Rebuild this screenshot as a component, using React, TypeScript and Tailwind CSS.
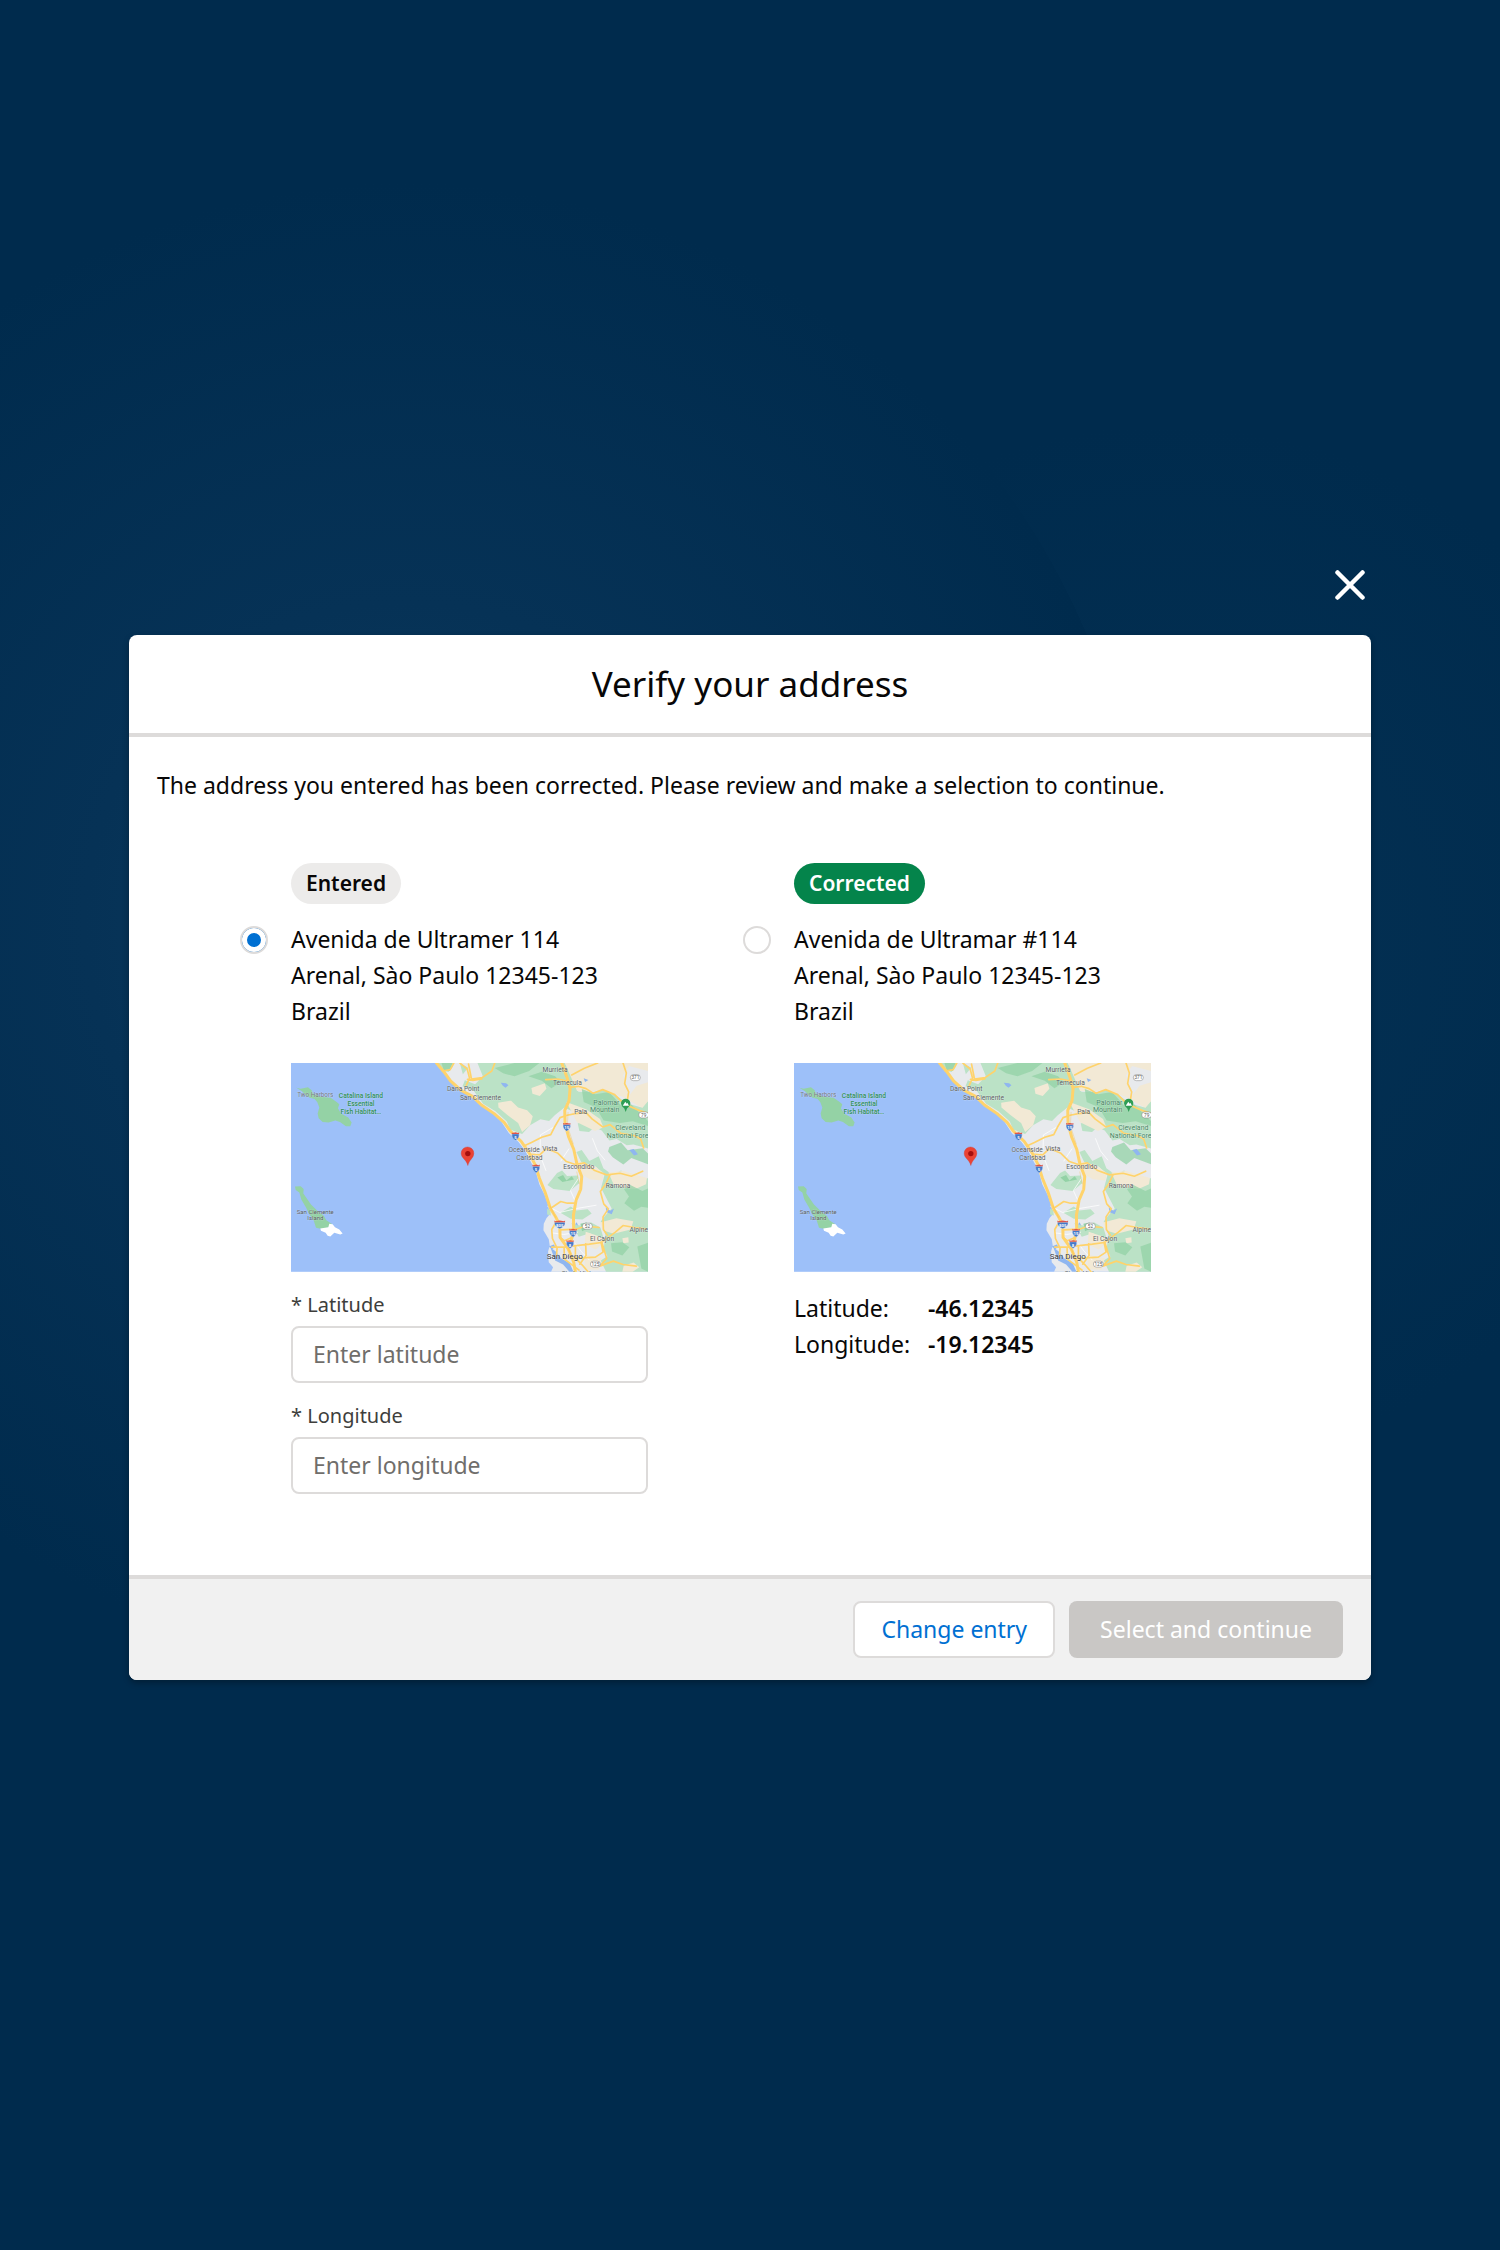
import { useState, type ReactNode } from "react";

type ShieldProps = { x: number; y: number; label: string; wide?: boolean };

function Shield({ x, y, label, wide = false }: ShieldProps) {
  const w = wide ? 16 : 11;
  return (
    <g transform={`translate(${x} ${y})`}>
      <path d={`M${-w} -7 Q${-w - 2} 6 0 13 Q${w + 2} 6 ${w} -7 Z`} fill="#4478c8" stroke="#fff" strokeWidth="1" />
      <path d={`M${-w} -12 L${-w + 3} -10 L0 -12 L${w - 3} -10 L${w} -12 L${w} -7 H${-w} Z`} fill="#e0564a" />
      <text y="7" textAnchor="middle" fontSize="13" fontWeight="700" fill="#fff">{label}</text>
    </g>
  );
}

function RoutePill({ x, y, label }: ShieldProps) {
  return (
    <g transform={`translate(${x} ${y})`}>
      <rect x="-15" y="-9" width="30" height="18" rx="9" fill="#fff" stroke="#777" strokeWidth="1.5" />
      <text y="5" textAnchor="middle" fontSize="14" fill="#555">{label}</text>
    </g>
  );
}

function CoastMap() {
  return (
    <svg viewBox="0 0 1072 627" className="block h-auto w-full" fontFamily='Roboto, "Noto Sans", sans-serif' role="img" aria-label="Map of the selected location">
      <rect width="1072" height="627" fill="#9dc0f9" />
      <g transform="translate(-33 -24)">
        <path d="M49 98 L62 101 L84 97 L95 106 L99 116 L124 125 L152 128 L171 142 L178 148 L174 160 L183 176 L205 188 L215 203 L211 214 L198 214 L180 201 L166 197 L146 203 L128 201 L116 190 L113 176 L118 158 L112 142 L104 132 L89 128 L76 119 L66 109 Z" fill="#94d2a5" />
        <path d="M45 395 L62 394 L71 402 L70 416 L80 430 L93 449 L112 468 L131 482 L139 496 L157 508 L146 518 L122 522 L108 519 L101 496 L88 478 L78 458 L64 434 L58 413 L47 405 Z" fill="#94d2a5" />
        <path d="M121 521 L145 517 L148 507 L158 508 L165 517 L178 524 L188 536 L181 539 L163 534 L151 545 L143 543 L137 534 L123 528 Z" fill="#fff" />
        <g textAnchor="middle" stroke="#fff" strokeOpacity="0.35" strokeWidth="2" paintOrder="stroke">
          <text x="106" y="127" fontSize="19" fill="#707780">Two Harbors</text>
          <g fontSize="20" fill="#2f8f58" fontWeight="500">
            <text x="243" y="130">Catalina Island</text>
            <text x="243" y="153">Essential</text>
            <text x="243" y="176">Fish Habitat…</text>
          </g>
          <g fontSize="18" fill="#555b60">
            <text x="106" y="477">San Clemente</text>
            <text x="106" y="496">Island</text>
          </g>
        </g>
      </g>
      <g transform="translate(507 -24)">
        <path d="M-70 24 L-51 48 L-20 84 L8 109 L36 125 L60 149 L98 174 L126 202 L147 234 L175 260 L195 285 L212 318 L228 350 L239 389 L255 421 L265 450 L270 478 L260 490 L252 507 L251 526 L267 553 L270 573 L265 590 L267 622 L280 637 L274 651 H565 V24 Z" fill="#e8eaed" />
        <g fill="#bbe2c6">
          <path d="M-70 24 L-53 46 L-34 51 L-22 36 L-17 24 Z M0 24 L9 58 L25 38 Z" />
          <path d="M53 24 L69 64 L46 88 L15 76 L8 94 L42 108 L70 146 L107 169 L141 200 L151 224 L187 237 L211 211 L242 193 L268 198 L285 181 L314 158 L338 169 L367 169 L380 194 L354 206 L359 228 L388 231 L404 217 L426 227 L449 257 L471 252 L501 271 L521 269 L565 281 V370 L523 370 L484 347 L459 360 L431 340 L417 304 L389 318 L366 285 L350 291 L365 323 L408 335 L434 362 L424 399 L440 430 L456 461 L437 482 L423 500 L437 539 L432 581 L443 604 L423 617 L439 651 H565 V137 L543 157 L505 146 L466 120 L430 105 L401 112 L356 110 L345 87 L332 50 L315 24 Z" />
          <path d="M263 390 L292 354 L307 347 L322 363 L354 362 L359 384 L330 408 L281 402 Z M302 474 L333 455 L350 467 L384 463 L396 476 L368 494 L333 492 Z M335 505 L371 515 L393 502 L422 518 L431 548 L406 552 L391 535 L357 546 Z M262 462 L272 466 L273 482 L262 479 Z" />
        </g>
        <g fill="#f2e9d5">
          <path d="M315 24 L332 62 L352 108 L398 108 L428 103 L490 126 L548 159 L565 139 V82 L531 92 L506 125 L498 95 L490 61 L508 33 L565 48 V24 Z" />
          <path d="M115 143 L154 137 L175 158 L202 166 L219 184 L211 211 L187 231 L175 204 L141 179 L116 158 Z M215 99 L255 85 L260 101 L240 123 L218 116 Z" />
          <path d="M320 141 L379 163 L421 192 L431 217 L406 228 L352 202 Z M347 317 L404 333 L433 355 L427 377 L390 373 L355 350 Z M446 353 L490 348 L562 369 L559 388 L526 403 L463 391 Z M421 503 L470 490 L521 499 L513 524 L462 537 L431 527 Z M378 531 L420 545 L433 561 L408 584 L375 568 Z M377 600 L426 610 L417 645 L373 643 Z M488 550 L506 547 L507 563 L491 565 Z M492 633 L522 623 L539 637 L519 651 H488 Z" />
        </g>
        <g fill="#93d2a6">
          <path d="M-55 24 L-49 45 L-30 48 L-22 24 Z M105 39 L164 24 H239 L208 48 L164 64 L130 55 Z M206 64 L246 50 L286 64 L303 82 L275 100 L246 77 Z M366 102 L407 118 L448 111 L485 152 L512 146 L565 198 V213 L519 199 L480 204 L432 197 L408 157 L372 141 Z M449 276 L484 263 L504 286 L549 280 L565 296 V328 L515 309 L491 329 L459 307 L445 290 Z M493 403 L512 390 L548 408 L565 401 V459 L545 456 L523 468 L494 445 L508 425 Z M454 565 L488 562 L509 577 L488 602 L457 590 Z M533 575 L565 564 V651 L545 641 Z" opacity="0.75" />
          <path d="M293 368 L310 360 L320 377 L336 364 L343 374 L308 381 Z M362 507 L381 503 L390 518 L367 529 Z" />
        </g>
        <g fill="#8fb6f0">
          <path d="M123 83 L139 85 L146 91 L137 98 L129 92 Z M372 70 L386 75 L376 81 Z M509 285 L522 282 L535 298 L523 302 Z M438 458 L452 468 L463 461 L456 478 L441 472 Z M272 578 L287 589 L305 611 L330 625 L341 651 H329 L310 629 L286 617 Z M267 575 L282 569 L287 576 L277 583 Z M346 508 L351 502 L355 512 Z" />
        </g>
        <g fill="none" stroke="#fff" strokeWidth="2.5" opacity="0.9">
          <path d="M220 285 L247 317 L259 348 M263 454 L300 473 L350 461 L410 451 M241 281 L242 240 L281 217 M303 319 L328 281 M356 371 L332 407 L348 442 M276 534 L312 539 L355 532 M398 250 L413 288 L436 316 M347 566 L364 589 L389 616" />
        </g>
        <g fill="none" stroke="#ffd36b" strokeLinejoin="round" strokeLinecap="round">
          <path strokeWidth="9" d="M-70 24 L-48 50 L-28 78 L2 105 L38 124 L65 150 L103 176 L133 202 L152 229 L184 259 L208 294 L226 329 L239 370 L256 412 L272 461 L287 485 L300 510 L301 548 L326 583 L342 622 L347 651" />
          <path strokeWidth="9" d="M306 24 L322 68 L331 101 L328 137 L315 166 L316 207 L327 247 L342 283 L352 329 L366 365 L363 403 L349 436 L341 481 L342 527 L333 563 L326 583" />
          <g strokeWidth="5">
            <path d="M-18 24 L-29 44 L-52 48 M0 24 L22 42 L29 69 L19 92 M26 27 L35 72 L67 68 L96 48 L105 24 M23 73 L39 76 L66 72" />
            <path d="M331 97 L355 94 L379 101 L400 115 L429 104 L465 119 L493 147 L540 167 L565 175 M329 80 L295 72 L258 74 M336 60 L374 40 L414 24 M490 24 L500 54 L495 86 L507 111 L504 130" />
            <path d="M192 273 L215 263 L246 247 L273 239 L284 217 L301 188 L322 181 L347 176 L379 173 L397 192 L429 216 L451 209 L483 235 L523 242 L543 252 L552 279" />
            <path d="M213 298 L240 300 L260 281 L293 294 L320 320 L347 329 L374 324 L405 347 L441 360 L481 355 L515 364 L549 349 M451 360 L437 389 L422 410 L432 447 L446 462 L430 486 L431 524 L443 541" />
            <path d="M272 461 L303 440 L323 445 L347 445 M302 525 L349 523 L376 514 L418 518 M290 500 L276 524 L278 551 L292 580 L290 604 M276 577 L314 577 L343 573 L389 568 L425 563 L443 550 L467 532 L490 512 L525 518 L557 522 M301 548 L314 558 L335 549 M313 579 L314 613 L334 628 L358 646 M347 574 L347 610 L367 630 L385 651 M378 568 L379 602 L360 628 M343 611 L407 607 L430 592 L424 562 M427 564 L441 611 L420 634 L461 619 L490 629 L530 634" />
          </g>
        </g>
        <g fill="none" stroke="#f4b83f" strokeWidth="1">
          <path d="M325 171 L323 213 L341 268 M351 350 L359 388 M270 452 L288 489 M325 579 L339 615" />
        </g>
        <Shield x={167} y={244} label="5" />
        <Shield x={229} y={341} label="5" />
        <Shield x={321} y={216} label="15" />
        <Shield x={300} y={509} label="805" wide />
        <Shield x={340} y={534} label="15" />
        <Shield x={331} y={568} label="8" />
        <RoutePill x={527} y={68} label="371" />
        <RoutePill x={552} y={180} label="79" />
        <RoutePill x={383} y={514} label="52" />
        <RoutePill x={407} y={628} label="125" />
        <path d="M498 171 L494 161 Q484 153 484 145 A14 14 0 0 1 512 145 Q512 153 502 161 Z" fill="#2f9e55" />
        <path d="M489 152 L497 140 L501 146 L503 143 L508 152 Z" fill="#fff" />
        <g textAnchor="middle" stroke="#fff" strokeOpacity="0.5" strokeWidth="2" paintOrder="stroke">
          <g fontSize="20" fill="#5a5e63">
            <text x="10" y="109">Dana Point</text>
            <text x="62" y="136">San Clemente</text>
            <text x="286" y="52">Murrieta</text>
            <text x="323" y="91">Temecula</text>
            <text x="363" y="178">Pala</text>
            <text x="193" y="291">Oceanside</text>
            <text x="270" y="289">Vista</text>
            <text x="209" y="316">Carlsbad</text>
            <text x="357" y="343">Escondido</text>
            <text x="475" y="398">Ramona</text>
            <text x="427" y="559">El Cajon</text>
            <text x="537" y="533">Alpine</text>
            <text x="355" y="663">Chula Vista</text>
          </g>
          <g fontSize="21" fill="#43835f">
            <text x="440" y="150">Palomar</text>
            <text x="435" y="172">Mountain</text>
            <text x="512" y="226">Cleveland</text>
            <text x="504" y="249">National Fore</text>
          </g>
          <text x="315" y="613" fontSize="24" fill="#303338">San Diego</text>
        </g>
        <path d="M24 332 C20 314 4 310 4 295 A19 19 0 0 1 42 295 C42 310 28 314 24 332 Z" fill="#ea4335" stroke="#d33b2d" strokeWidth="1" />
        <circle cx="24" cy="296" r="8" fill="#a50e0e" />
      </g>
    </svg>
  );
}

type AddressOptionProps = {
  id: string;
  badge: string;
  badgeClass: string;
  lines: string[];
  checked: boolean;
  onSelect: () => void;
  children: ReactNode;
};

function AddressOption({ id, badge, badgeClass, lines, checked, onSelect, children }: AddressOptionProps) {
  return (
    <div className="grid w-[408px] max-w-full grid-cols-[28px_minmax(0,1fr)] content-start gap-x-[23px]">
      <span className={`col-start-2 justify-self-start rounded-full px-[15px] text-[21px] leading-[41px] font-semibold ${badgeClass}`}>{badge}</span>
      <input
        id={id}
        type="radio"
        name="address"
        checked={checked}
        onChange={onSelect}
        className="col-start-1 mt-[22px] size-7 appearance-none rounded-full border-2 border-[#dddbda] bg-white checked:bg-[#0070d2] checked:shadow-[inset_0_0_0_5px_#ffffff]"
      />
      <label htmlFor={id} className="col-start-2 mt-[17px] text-[23px] leading-9">
        {lines.map((line) => (
          <span key={line} className="block">{line}</span>
        ))}
      </label>
      <div className="col-start-2 mt-[34px]">
        <CoastMap />
        {children}
      </div>
    </div>
  );
}

function CoordinateField({ id, label }: { id: string; label: string }) {
  return (
    <div className="mt-[19px]">
      <label htmlFor={id} className="block text-xl leading-7 text-[#3e3e3c]">* {label}</label>
      <input
        id={id}
        required
        placeholder={`Enter ${label.toLowerCase()}`}
        className="mt-[7px] block h-[57px] w-full rounded-lg border-2 border-[#dddbda] bg-white px-5 text-[23px] placeholder:text-[#706e6b]"
      />
    </div>
  );
}

export default function App() {
  const [choice, setChoice] = useState("entered");

  return (
    <main className='flex min-h-screen flex-col items-center justify-center bg-[#002b4d] bg-[radial-gradient(circle_at_27%_41%,#0c3b5f_0px,#063256_320px,#002b4d_740px,transparent_740px),radial-gradient(circle_at_78%_42%,#043154_0px,#002b4d_520px)] px-6 font-["Noto_Sans","Open_Sans",sans-serif] text-[#080707]'>
      <div className="w-full max-w-[1242px]">
        <div className="mb-[35px] flex justify-end pr-[6px]">
          <button type="button" aria-label="Close" className="size-[30px] text-white">
            <svg viewBox="0 0 30 30" className="size-full" fill="none" stroke="currentColor" strokeWidth="4.5" strokeLinecap="round">
              <path d="M2.5 2.5 L27.5 27.5 M27.5 2.5 L2.5 27.5" />
            </svg>
          </button>
        </div>
        <section role="dialog" aria-labelledby="dialog-title" className="overflow-hidden rounded-lg bg-white shadow-[0_3px_6px_rgba(0,0,0,0.3)]">
          <header className="border-b-4 border-[#dddbda] px-7 py-6 text-center">
            <h1 id="dialog-title" className="text-[35px] leading-[50px]">Verify your address</h1>
          </header>
          <div className="px-7 pt-[30px] pb-[81px]">
            <p className="text-[23px] leading-9">The address you entered has been corrected. Please review and make a selection to continue.</p>
            <div className="mt-[60px] flex flex-wrap gap-x-[95px] gap-y-10 pl-[83px]">
              <AddressOption
                id="address-entered"
                badge="Entered"
                badgeClass="bg-[#ecebea]"
                lines={["Avenida de Ultramer 114", "Arenal, Sào Paulo 12345-123", "Brazil"]}
                checked={choice === "entered"}
                onSelect={() => setChoice("entered")}
              >
                <CoordinateField id="latitude" label="Latitude" />
                <CoordinateField id="longitude" label="Longitude" />
              </AddressOption>
              <AddressOption
                id="address-corrected"
                badge="Corrected"
                badgeClass="bg-[#04844b] text-white"
                lines={["Avenida de Ultramar #114", "Arenal, Sào Paulo 12345-123", "Brazil"]}
                checked={choice === "corrected"}
                onSelect={() => setChoice("corrected")}
              >
                <dl className="mt-[18px] grid grid-cols-[134px_1fr] text-[23px] leading-9">
                  <dt>Latitude:</dt>
                  <dd className="font-semibold">-46.12345</dd>
                  <dt>Longitude:</dt>
                  <dd className="font-semibold">-19.12345</dd>
                </dl>
              </AddressOption>
            </div>
          </div>
          <footer className="flex flex-wrap justify-end gap-[14px] border-t-4 border-[#dddbda] bg-[#f1f1f1] px-7 py-[22px]">
            <button type="button" className="h-[57px] rounded-lg border-2 border-[#dddbda] bg-white px-[26px] text-[23px] text-[#0070d2]">Change entry</button>
            <button type="button" disabled className="h-[57px] rounded-lg bg-[#c9c7c5] px-[31px] text-[23px] text-white">Select and continue</button>
          </footer>
        </section>
      </div>
    </main>
  );
}
